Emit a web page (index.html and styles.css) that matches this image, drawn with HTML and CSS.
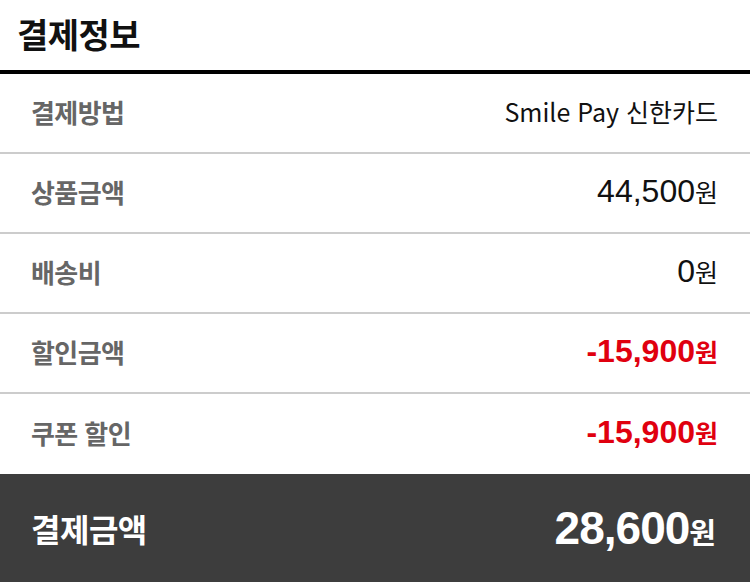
FILE: index.html
```html
<!DOCTYPE html>
<html lang="ko">
<head>
<meta charset="utf-8">
<link rel="stylesheet" href="styles.css">
</head>
<body>
<section class="pay">
  <h2 class="pay-title">결제정보</h2>
  <ul class="pay-list">
    <li class="pay-row"><span class="label">결제방법</span><span class="value method">Smile Pay 신한카드</span></li>
    <li class="pay-row"><span class="label">상품금액</span><span class="value"><span class="num">44,500</span><span class="won">원</span></span></li>
    <li class="pay-row"><span class="label">배송비</span><span class="value"><span class="num">0</span><span class="won">원</span></span></li>
    <li class="pay-row"><span class="label">할인금액</span><span class="value discount"><span class="num">-15,900</span><span class="won">원</span></span></li>
    <li class="pay-row"><span class="label">쿠폰 할인</span><span class="value discount"><span class="num">-15,900</span><span class="won">원</span></span></li>
  </ul>
  <div class="pay-total">
    <span class="total-label">결제금액</span>
    <span class="total-value"><span class="num">28,600</span><span class="won">원</span></span>
  </div>
</section>
</body>
</html>
```
FILE: styles.css
```css
* { box-sizing: border-box; }
html, body { margin: 0; padding: 0; background: #fff; }
body { font-family: "Noto Sans CJK KR", "Noto Sans", sans-serif; width: 750px; }

.pay-title {
  margin: 0;
  height: 74px;
  padding-left: 17px;
  display: flex;
  align-items: center;
  padding-bottom: 4px;
  font-size: 34px;
  font-weight: 700;
  color: #111;
  border-bottom: 4px solid #000;
  letter-spacing: -0.5px;
}

.pay-list { list-style: none; margin: 0; padding: 0; }
.pay-row {
  height: 80px;
  display: flex;
  align-items: center;
  justify-content: space-between;
  padding: 0 32px 4px 31px;
  border-bottom: 2px solid #cccccc;
}
.pay-row:last-child { border-bottom: none; }

.label {
  font-size: 26px;
  font-weight: 700;
  color: #666;
  letter-spacing: -0.6px;
}

.value { display: flex; align-items: baseline; color: #111; }
.value .num { font-family: "Liberation Sans", Arial, sans-serif; font-size: 32px; }
.value .won { font-size: 25px; }
.method { font-size: 25px; color: #111; letter-spacing: 0; }

.discount { color: #e0000f; }
.discount .num { font-weight: 700; font-size: 32px; }
.discount .won { font-weight: 700; }

.pay-total {
  height: 108px;
  background: #3d3d3d;
  display: flex;
  align-items: center;
  justify-content: space-between;
  padding: 0 34px 0 31px;
  color: #fff;
}
.total-label { font-size: 32px; font-weight: 700; letter-spacing: -0.5px; }
.total-value { display: flex; align-items: baseline; }
.total-value .num { font-family: "Liberation Sans", Arial, sans-serif; font-weight: 700; font-size: 46px; letter-spacing: -1px; }
.total-value .won { font-size: 29px; font-weight: 700; }
```
